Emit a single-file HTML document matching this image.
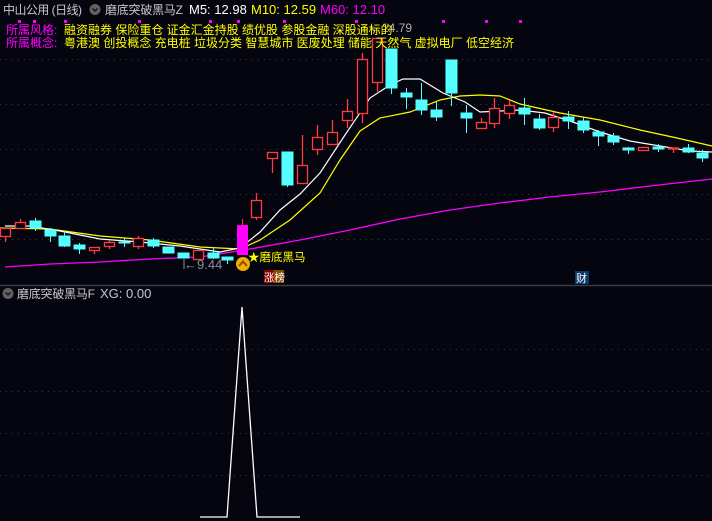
<!DOCTYPE html>
<html><head><meta charset="utf-8"><style>
html,body{margin:0;padding:0;background:#05050f;width:712px;height:521px;overflow:hidden}
body{font-family:"Liberation Sans","Noto Sans CJK SC",sans-serif}
svg{position:absolute;left:0;top:0}
</style></head><body>
<svg width="712" height="521" xmlns="http://www.w3.org/2000/svg" font-family="Liberation Sans, Noto Sans CJK SC, sans-serif">
<rect width="712" height="521" fill="#05050f"/>
<g stroke="#3a3a46" stroke-dasharray="1,5" stroke-width="1">
<line x1="0" y1="59.5" x2="712" y2="59.5"/><line x1="0" y1="104.5" x2="712" y2="104.5"/>
<line x1="0" y1="149.5" x2="712" y2="149.5"/><line x1="0" y1="194.5" x2="712" y2="194.5"/>
<line x1="0" y1="239.5" x2="712" y2="239.5"/>
<line x1="0" y1="349.5" x2="712" y2="349.5"/><line x1="0" y1="391.5" x2="712" y2="391.5"/>
<line x1="0" y1="433.5" x2="712" y2="433.5"/><line x1="0" y1="475.5" x2="712" y2="475.5"/>
</g>
<line x1="0" y1="285.5" x2="712" y2="285.5" stroke="#3c3c44" stroke-width="1.5"/>
<polyline fill="none" stroke="#ff00ff" stroke-width="1.3" points="5,267 50,264 100,262 150,259 200,257 250,249 300,240 350,230 400,219 450,210 500,203 550,197 600,192 650,186 712,179"/>
<polyline fill="none" stroke="#ffff00" stroke-width="1.2" points="0,228 50,229 100,236 150,240 200,247 240,249 260,240 290,220 320,193 340,160 360,131 380,118 410,112 440,100 460,96 480,95 500,96 520,104 560,113 600,120 640,130 677,138 712,146"/>
<polyline fill="none" stroke="#ffffff" stroke-width="1.2" points="5,226 30,226 60,231 100,239 140,242 180,246 220,252 240,248 260,232 280,210 300,194 320,173 345,135 370,98 390,85 403,79 420,79 443,93 465,102 480,112 500,111 520,110 545,113 570,121 600,132 630,141 660,146 690,151 712,152"/>
<g fill="#05050f" stroke="#ff3c3c" stroke-width="1.3">
<line x1="5.5" y1="237" x2="5.5" y2="242"/><rect x="0.5" y="228.5" width="10" height="8"/>
<line x1="20.5" y1="219" x2="20.5" y2="222"/><rect x="15.5" y="222.5" width="10" height="6"/>
<line x1="94.5" y1="250" x2="94.5" y2="254"/><rect x="89.5" y="247.5" width="10" height="3"/>
<line x1="109.5" y1="240" x2="109.5" y2="249"/><rect x="104.5" y="242.5" width="10" height="4"/>
<line x1="138.5" y1="236" x2="138.5" y2="249"/><rect x="133.5" y="238.5" width="10" height="8"/>
<rect x="193.5" y="250.5" width="10" height="9"/>
<line x1="256.5" y1="193" x2="256.5" y2="200"/><line x1="256.5" y1="217" x2="256.5" y2="220"/><rect x="251.5" y="200.5" width="10" height="17"/>
<line x1="272.5" y1="158" x2="272.5" y2="173"/><rect x="267.5" y="152.5" width="10" height="6"/>
<line x1="302.5" y1="135" x2="302.5" y2="165"/><rect x="297.5" y="165.5" width="10" height="18"/>
<line x1="317.5" y1="125" x2="317.5" y2="155"/><rect x="312.5" y="137.5" width="10" height="12"/>
<line x1="332.5" y1="120" x2="332.5" y2="132"/><rect x="327.5" y="132.5" width="10" height="12"/>
<line x1="347.5" y1="99" x2="347.5" y2="128"/><rect x="342.5" y="111.5" width="10" height="9"/>
<line x1="362.5" y1="53" x2="362.5" y2="59"/><line x1="362.5" y1="113" x2="362.5" y2="123"/><rect x="357.5" y="59.5" width="10" height="54"/>
<line x1="377.5" y1="82" x2="377.5" y2="93"/><rect x="372.5" y="38.5" width="10" height="44"/>
<line x1="481.5" y1="118" x2="481.5" y2="122"/><rect x="476.5" y="122.5" width="10" height="6"/>
<line x1="494.5" y1="98" x2="494.5" y2="108"/><line x1="494.5" y1="123" x2="494.5" y2="128"/><rect x="489.5" y="108.5" width="10" height="15"/>
<line x1="509.5" y1="100" x2="509.5" y2="105"/><line x1="509.5" y1="113" x2="509.5" y2="119"/><rect x="504.5" y="105.5" width="10" height="8"/>
<line x1="553.5" y1="112" x2="553.5" y2="117"/><line x1="553.5" y1="127" x2="553.5" y2="132"/><rect x="548.5" y="117.5" width="10" height="10"/>
<rect x="638.5" y="147.5" width="10" height="3"/>
<line x1="673.5" y1="148" x2="673.5" y2="153"/><rect x="668.5" y="148" width="10" height="1"/>
</g>
<g fill="#54ffff" stroke="#54ffff" stroke-width="1">
<rect x="30" y="221" width="11" height="7"/><line x1="35.5" y1="218" x2="35.5" y2="231"/>
<rect x="45" y="230" width="11" height="6"/><line x1="50.5" y1="228" x2="50.5" y2="242"/>
<rect x="59" y="236" width="11" height="10"/><line x1="64.5" y1="231" x2="64.5" y2="247"/>
<rect x="74" y="245" width="11" height="4"/><line x1="79.5" y1="243" x2="79.5" y2="254"/>
<rect x="119" y="242" width="11" height="1"/><line x1="124.5" y1="238" x2="124.5" y2="247"/>
<rect x="148" y="240" width="11" height="6"/><line x1="153.5" y1="238" x2="153.5" y2="248"/>
<rect x="163" y="247" width="11" height="6"/>
<rect x="178" y="253" width="11" height="5"/>
<rect x="208" y="253" width="11" height="5"/><line x1="213.5" y1="247" x2="213.5" y2="259"/>
<rect x="222" y="257" width="11" height="3"/><line x1="227.5" y1="257" x2="227.5" y2="264"/>
<rect x="282" y="152" width="11" height="33"/><line x1="287.5" y1="185" x2="287.5" y2="187"/>
<rect x="386" y="49" width="11" height="39"/><line x1="391.5" y1="88" x2="391.5" y2="94"/>
<rect x="401" y="93" width="11" height="4"/><line x1="406.5" y1="88" x2="406.5" y2="109"/>
<rect x="416" y="100" width="11" height="10"/><line x1="421.5" y1="83" x2="421.5" y2="115"/>
<rect x="431" y="110" width="11" height="7"/><line x1="436.5" y1="102" x2="436.5" y2="121"/>
<rect x="446" y="60" width="11" height="33"/><line x1="451.5" y1="93" x2="451.5" y2="106"/>
<rect x="461" y="113" width="11" height="5"/><line x1="466.5" y1="105" x2="466.5" y2="133"/>
<rect x="519" y="108" width="11" height="6"/><line x1="524.5" y1="98" x2="524.5" y2="125"/>
<rect x="534" y="119" width="11" height="9"/><line x1="539.5" y1="114" x2="539.5" y2="130"/>
<rect x="563" y="117" width="11" height="4"/><line x1="568.5" y1="111" x2="568.5" y2="129"/>
<rect x="578" y="121" width="11" height="9"/><line x1="583.5" y1="117" x2="583.5" y2="133"/>
<rect x="593" y="132" width="11" height="4"/><line x1="598.5" y1="130" x2="598.5" y2="146"/>
<rect x="608" y="136" width="11" height="6"/><line x1="613.5" y1="133" x2="613.5" y2="145"/>
<rect x="623" y="148" width="11" height="2"/><line x1="628.5" y1="147" x2="628.5" y2="154"/>
<rect x="653" y="147" width="11" height="2"/><line x1="658.5" y1="144" x2="658.5" y2="152"/>
<rect x="683" y="148" width="11" height="4"/><line x1="688.5" y1="144" x2="688.5" y2="153"/>
<rect x="697" y="153" width="11" height="5"/><line x1="702.5" y1="150" x2="702.5" y2="162"/>
</g>
<line x1="242.5" y1="219" x2="242.5" y2="225" stroke="#ff3c3c"/>
<rect x="237" y="225" width="11" height="30" fill="#ff00ff"/>
<text x="184" y="269" font-size="13" fill="#8c8c9c">←9.44</text>
<line x1="184" y1="259" x2="184" y2="269" stroke="#8c8c9c"/>
<circle cx="243" cy="264" r="7" fill="#f0b000"/>
<path d="M239 266 L243 261.5 L247 266" stroke="#a04000" stroke-width="2" fill="none"/>
<text x="248" y="261" font-size="11.5" fill="#ffff00">★磨底黑马</text>
<rect x="264" y="270" width="10" height="13" fill="#8a0000"/><rect x="274" y="270" width="10" height="13" fill="#8a4a00"/>
<text x="264" y="281" font-size="10.5" fill="#fff">涨榜</text>
<rect x="575" y="271" width="14" height="13" fill="#0a3a6a"/>
<text x="576" y="282" font-size="11" fill="#fff">财</text>
<text x="370" y="32" font-size="12" fill="#b0b0b0">←14.79</text>
<text x="3" y="14" font-size="12" fill="#c8c8c8" textLength="79">中山公用 (日线)</text>
<circle cx="95" cy="9.5" r="5.5" fill="#606060"/><path d="M92.5 8.5 L95 11 L97.5 8.5" stroke="#111" stroke-width="1.3" fill="none"/>
<text x="105" y="14" font-size="12" fill="#c8c8c8" textLength="78">磨底突破黑马Z</text>
<text x="189" y="14" font-size="13" fill="#ffffff">M5: 12.98</text>
<text x="251" y="14" font-size="13" fill="#ffff00">M10: 12.59</text>
<text x="320" y="14" font-size="13" fill="#ff00ff">M60: 12.10</text>
<g fill="#ff00ff">
<rect x="18" y="20" width="3" height="3"/><rect x="33" y="20" width="3" height="3"/><rect x="64" y="20" width="3" height="3"/>
<rect x="138" y="20" width="3" height="3"/><rect x="209" y="20" width="3" height="3"/><rect x="237" y="20" width="3" height="3"/>
<rect x="283" y="20" width="3" height="3"/><rect x="355" y="20" width="3" height="3"/><rect x="442" y="20" width="3" height="3"/>
<rect x="485" y="20" width="3" height="3"/><rect x="519" y="20" width="3" height="3"/>
</g>
<text x="6" y="34" font-size="12" fill="#ff00ff">所属风格:</text>
<text x="64" y="34" font-size="12" fill="#ffff00">融资融券 保险重仓 证金汇金持股 绩优股 参股金融 深股通标的</text>
<text x="6" y="47" font-size="12" fill="#ff00ff">所属概念:</text>
<text x="64" y="47" font-size="12" fill="#ffff00">粤港澳 创投概念 充电桩 垃圾分类 智慧城市 医废处理 储能 天然气 虚拟电厂 低空经济</text>
<circle cx="8" cy="293.5" r="5.5" fill="#606060"/><path d="M5.5 292.5 L8 295 L10.5 292.5" stroke="#111" stroke-width="1.3" fill="none"/>
<text x="17" y="298" font-size="12" fill="#c8c8c8" textLength="78">磨底突破黑马F</text>
<text x="100" y="298" font-size="13" fill="#c8c8dc">XG: 0.00</text>
<polyline fill="none" stroke="#ffffff" stroke-width="1.3" points="200,517 227,517 242,307 257,517 300,517"/>
</svg>
</body></html>
